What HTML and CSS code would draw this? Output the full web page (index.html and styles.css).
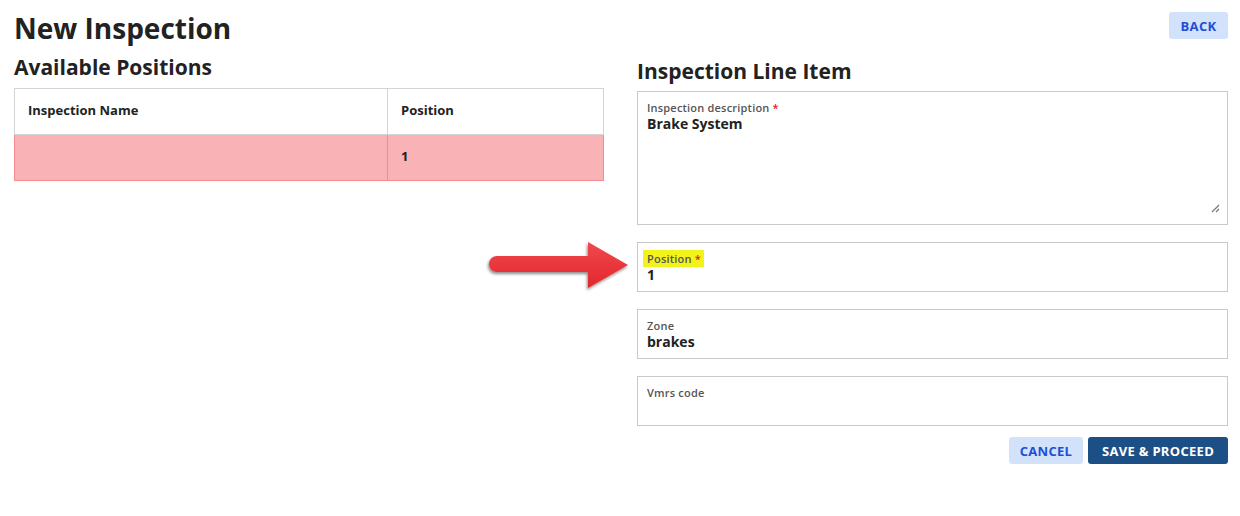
FILE: index.html
```html
<!DOCTYPE html>
<html lang="en">
<head>
<meta charset="utf-8">
<title>New Inspection</title>
<link rel="stylesheet" href="styles.css">
</head>
<body>
<div class="page">
  <header class="top">
    <h1 class="title">New Inspection</h1>
    <button class="btn btn-light btn-back">BACK</button>
  </header>

  <div class="columns">
    <section class="col-left">
      <h2 class="section-title">Available Positions</h2>
      <table class="positions">
        <thead>
          <tr><th class="c-name">Inspection Name</th><th>Position</th></tr>
        </thead>
        <tbody>
          <tr class="taken"><td></td><td>1</td></tr>
        </tbody>
      </table>
    </section>

    <section class="col-right">
      <h2 class="section-title right-title">Inspection Line Item</h2>

      <div class="field field-area">
        <label class="label">Inspection description <span class="req">*</span></label>
        <div class="value">Brake System</div>
        <svg class="grip" width="10" height="10" viewBox="0 0 10 10">
          <path d="M9 2 L2 9 M9 6 L6 9" stroke="#777" stroke-width="1.2" fill="none"/>
        </svg>
      </div>

      <div class="field field-pos">
        <svg class="pointer" width="150" height="60" viewBox="0 0 150 60">
          <defs>
            <linearGradient id="arrowFill" x1="0" y1="0" x2="0" y2="1">
              <stop offset="0" stop-color="#f0494d"/>
              <stop offset="1" stop-color="#e1262c"/>
            </linearGradient>
            <filter id="arrowShadow" x="-10%" y="-20%" width="120%" height="150%">
              <feDropShadow dx="-1" dy="2" stdDeviation="1.5" flood-color="#000" flood-opacity="0.45"/>
            </filter>
          </defs>
          <path d="M13 19 L104 19 L104 5 L144 28 L104 51 L104 35 L13 35 A8 8 0 0 1 13 19 Z"
                fill="url(#arrowFill)" filter="url(#arrowShadow)"/>
        </svg>
        <label class="label"><span class="mark">Position <span class="req">*</span></span></label>
        <div class="value">1</div>
      </div>

      <div class="field">
        <label class="label">Zone</label>
        <div class="value">brakes</div>
      </div>

      <div class="field">
        <label class="label">Vmrs code</label>
        <div class="value"></div>
      </div>

      <div class="actions">
        <button class="btn btn-light btn-cancel">CANCEL</button>
        <button class="btn btn-dark btn-save">SAVE &amp; PROCEED</button>
      </div>
    </section>
  </div>
</div>
</body>
</html>
```

FILE: styles.css
```css
* { box-sizing: border-box; }

body {
  margin: 0;
  background: #fff;
  color: #222;
  font-family: "Open Sans", "DejaVu Sans", sans-serif;
}

.page {
  padding: 12px 12px 0 14px;
}

.top {
  display: flex;
  justify-content: space-between;
  align-items: flex-start;
}

.title {
  margin: 0;
  font-size: 28px;
  font-weight: 700;
  line-height: 32px;
  color: #222;
}

.btn {
  border: none;
  border-radius: 3px;
  font-family: "Open Sans", "DejaVu Sans", sans-serif;
  font-weight: 700;
  font-size: 13px;
  letter-spacing: 0.3px;
  height: 27px;
  padding: 0;
  cursor: pointer;
}

.btn-light {
  background: #d3e2fb;
  color: #1d4fd6;
}

.btn-dark {
  background: #1b4f86;
  color: #fff;
}

.btn-back { width: 59px; }
.btn-cancel { width: 74px; }
.btn-save { width: 140px; }

.columns {
  display: flex;
  gap: 33px;
}

.col-left {
  width: 590px;
}

.col-right {
  flex: 1;
  display: flex;
  flex-direction: column;
  gap: 17px;
}

.section-title {
  margin: 10px 0 8px;
  font-size: 21px;
  font-weight: 700;
  line-height: 26px;
  color: #222;
}

.right-title {
  margin: 14px 0 -10px;
}

.positions {
  width: 100%;
  border-collapse: collapse;
  font-size: 13px;
}

.positions th,
.positions td {
  height: 46px;
  padding: 0 13px 3px;
  text-align: left;
  border: 1px solid #d4d4d4;
  font-weight: 700;
  color: #222;
}

.positions .c-name {
  width: 373px;
}

.positions tr.taken td {
  background: #f9b3b6;
  border-color: #f38b8f;
}

.field {
  position: relative;
  border: 1px solid #c9c9c9;
  height: 50px;
  padding: 8px 9px 0;
}

.field-area {
  height: 134px;
}

.label {
  display: block;
  font-size: 11px;
  font-weight: 600;
  line-height: 15px;
  letter-spacing: 0.2px;
  color: #555;
}

.req {
  color: #e0201f;
}

.mark {
  background: #f3f31c;
  color: #555;
  padding: 1px 3px 1px 4px;
  margin-left: -4px;
}

.value {
  font-size: 14px;
  font-weight: 700;
  line-height: 18px;
  color: #222;
}

.grip {
  position: absolute;
  right: 7px;
  bottom: 11px;
}

.pointer {
  position: absolute;
  right: 100%;
  top: -6px;
  margin-right: 4px;
  overflow: visible;
}

.actions {
  display: flex;
  justify-content: flex-end;
  gap: 5px;
  margin-top: -6px;
}
```
